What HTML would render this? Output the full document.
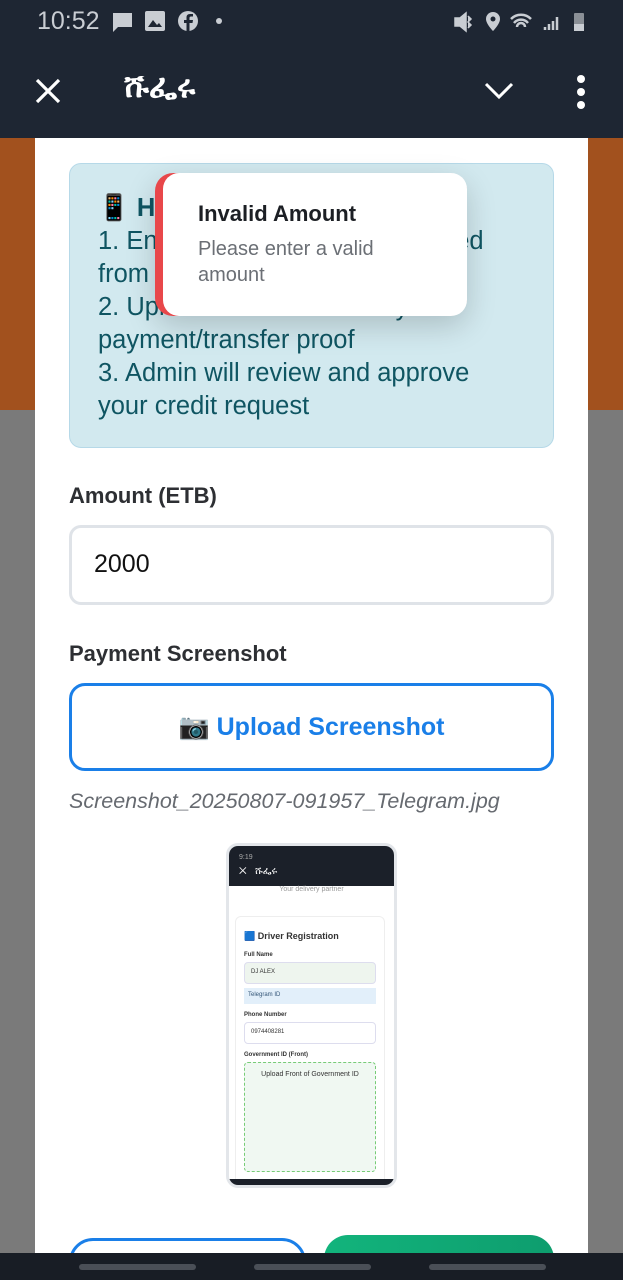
<!DOCTYPE html>
<html><head><meta charset="utf-8"><style>
*{margin:0;padding:0;box-sizing:border-box}
html,body{width:623px;height:1280px;overflow:hidden}
body{position:relative;font-family:"Liberation Sans","Noto Sans CJK SC",sans-serif;background:#7a7a7a}
.abs{position:absolute}
#status{left:0;top:0;width:623px;height:45px;background:#1e2633;color:#c8ccd2}
#appbar{left:0;top:45px;width:623px;height:93px;background:#1e2633}
#orange{left:0;top:138px;width:623px;height:272px;background:#a2511e}
#modal{left:35px;top:138px;width:553px;height:1115px;background:#fff;overflow:hidden}
#nav{left:0;top:1253px;width:623px;height:27px;background:#181d25}
.pill{position:absolute;top:11px;height:6px;width:117px;border-radius:3px;background:#4a4f57}
</style></head><body>
<div class="abs" id="status">
 <div class="abs" style="left:37px;top:7px;font-size:25px;color:#c9cdd3">10:52</div>
 <svg class="abs" style="left:110px;top:11px" width="24" height="22"><path d="M2 2h20v14H8l-5 5V2z" fill="#c9cdd3"/></svg>
 <svg class="abs" style="left:144px;top:10px" width="22" height="22"><rect x="1" y="1" width="20" height="20" rx="2" fill="#c9cdd3"/><path d="M4 17l5-7 4 5 2-2 3 4z" fill="#1e2633"/></svg>
 <svg class="abs" style="left:177px;top:10px" width="22" height="22"><circle cx="11" cy="11" r="10" fill="#c9cdd3"/><path d="M12.5 21v-8h3l.5-3h-3.5V8c0-1 .5-1.5 1.5-1.5h2V4h-3c-2.5 0-3.5 1.5-3.5 3.5V10h-2.5v3H9.5v8z" fill="#1e2633"/></svg>
 <div class="abs" style="left:216px;top:18px;width:6px;height:6px;border-radius:3px;background:#c9cdd3"></div>
 <svg class="abs" style="left:453px;top:10px" width="140" height="24"><path d="M2 8h5l6-5v18l-6-5H2z M15 6l3 3-3 3 3 3-3 3" fill="#c9cdd3" stroke="#c9cdd3" stroke-width="1.5"/><path d="M40 2a7 7 0 0 1 7 7c0 5-7 12-7 12s-7-7-7-12a7 7 0 0 1 7-7z" fill="#c9cdd3"/><circle cx="40" cy="9" r="2.5" fill="#1e2633"/><path d="M58 9a14 14 0 0 1 20 0M61 13a9 9 0 0 1 14 0M64 17a4 4 0 0 1 8 0" stroke="#c9cdd3" stroke-width="2.5" fill="none"/><path d="M92 20v-3M96 20v-6M100 20v-9M104 20v-13" stroke="#c9cdd3" stroke-width="2.5"/><rect x="121" y="3" width="10" height="18" rx="1" fill="#8a8f96"/><rect x="121" y="14" width="10" height="7" fill="#c9cdd3"/></svg>
</div>
<div class="abs" id="appbar">
 <svg class="abs" style="left:34px;top:32px" width="28" height="28"><path d="M3 3l22 22M25 3L3 25" stroke="#fff" stroke-width="3.2"/></svg>
 <div class="abs" style="left:124px;top:22px;font-size:32px;font-weight:bold;color:#fff;font-family:'DejaVu Sans',sans-serif">ሹፌሩ</div>
 <svg class="abs" style="left:484px;top:36px" width="30" height="20"><path d="M2 3l13 13L28 3" stroke="#fff" stroke-width="3" fill="none"/></svg>
 <div class="abs" style="left:577px;top:30px;width:8px;height:8px;border-radius:4px;background:#fff;box-shadow:0 13px 0 #fff,0 26px 0 #fff"></div>
</div>
<div class="abs" id="orange"></div>
<div class="abs" id="modal">
 <div class="abs" style="left:34px;top:25px;width:485px;height:285px;background:#d2e9ef;border:1.5px solid #b6d9e8;border-radius:12px;color:#0f5562;font-size:25.5px;line-height:33px;padding:28px 30px 0 28px">
  <div><b>📱 How it works:</b></div>
  <div>1. Enter the amount to be credited from your account</div>
  <div>2. Upload a screenshot of your payment/transfer proof</div>
  <div>3. Admin will review and approve your credit request</div>
 </div>
 <div class="abs" style="left:34px;top:345px;font-size:22px;font-weight:bold;color:#2d2f33">Amount (ETB)</div>
 <div class="abs" style="left:34px;top:387px;width:485px;height:80px;border:3px solid #dfe3e8;border-radius:12px;font-size:25px;color:#111;padding:22px 0 0 22px">2000</div>
 <div class="abs" style="left:34px;top:503px;font-size:22px;font-weight:bold;color:#2d2f33">Payment Screenshot</div>
 <div class="abs" style="left:34px;top:545px;width:485px;height:88px;border:3px solid #1a7fe8;border-radius:16px;text-align:center;font-size:25px;font-weight:bold;color:#1a7fe8;line-height:82px">📷 Upload Screenshot</div>
 <div class="abs" style="left:34px;top:651px;font-size:21.5px;font-style:italic;color:#666a70">Screenshot_20250807-091957_Telegram.jpg</div>
 <div class="abs" style="left:191px;top:705px;width:171px;height:345px;border:3px solid #e3e6ea;border-radius:12px;overflow:hidden;background:#fff">
  <div style="height:40px;background:#1b2029"></div>
  <div style="position:absolute;left:10px;top:8px;font-size:7px;color:#aaa">9:19</div>
  <div style="position:absolute;left:10px;top:20px;font-size:10px;color:#fff">✕ &nbsp; ሹፌሩ</div>
  <div style="text-align:center;font-size:7px;color:#999">Your delivery partner</div>
  <div style="position:absolute;left:6px;top:70px;width:150px;height:280px;border:1px solid #eee;border-radius:6px;padding:8px;font-size:6px;color:#333">
   <div style="font-size:9px;font-weight:bold;margin-top:6px">🟦 Driver Registration</div>
   <div style="margin-top:10px;font-weight:bold">Full Name</div>
   <div style="margin-top:4px;height:22px;background:#eef5ee;border:1px solid #dde;border-radius:4px;padding:6px">DJ ALEX</div>
   <div style="margin-top:4px;height:16px;background:#e2effa;padding:4px;color:#357">Telegram ID</div>
   <div style="margin-top:8px;font-weight:bold">Phone Number</div>
   <div style="margin-top:4px;height:22px;border:1px solid #dde;border-radius:4px;padding:6px">0974408281</div>
   <div style="margin-top:8px;font-weight:bold">Government ID (Front)</div>
   <div style="margin-top:4px;height:110px;background:#f0f8f2;border:1px dashed #7c7;border-radius:4px;text-align:center;padding-top:8px;font-size:7px">Upload Front of Government ID</div>
  </div>
  <div style="position:absolute;left:0;bottom:0;width:100%;height:6px;background:#1b2029"></div>
 </div>
 <div class="abs" style="left:34px;top:1100px;width:237px;height:60px;border:3px solid #1a7fe8;border-radius:24px"></div>
 <div class="abs" style="left:289px;top:1097px;width:230px;height:60px;background:linear-gradient(90deg,#12b47c,#0e9d6e);border-radius:24px"></div>
</div>
<div class="abs" style="left:155px;top:173px;width:312px;height:143px;background:#e8474a;border-radius:18px;box-shadow:0 10px 30px rgba(0,0,0,.18)"></div>
<div class="abs" style="left:163px;top:173px;width:304px;height:143px;background:#fff;border-radius:16px;padding:28px 0 0 35px">
 <div style="font-size:22px;font-weight:bold;color:#1c1f24">Invalid Amount</div>
 <div style="font-size:20px;color:#6b6f75;line-height:26px;margin-top:9px;width:220px">Please enter a valid amount</div>
</div>
<div class="abs" id="nav"><div class="pill" style="left:79px"></div><div class="pill" style="left:254px"></div><div class="pill" style="left:429px"></div></div>
</body></html>
